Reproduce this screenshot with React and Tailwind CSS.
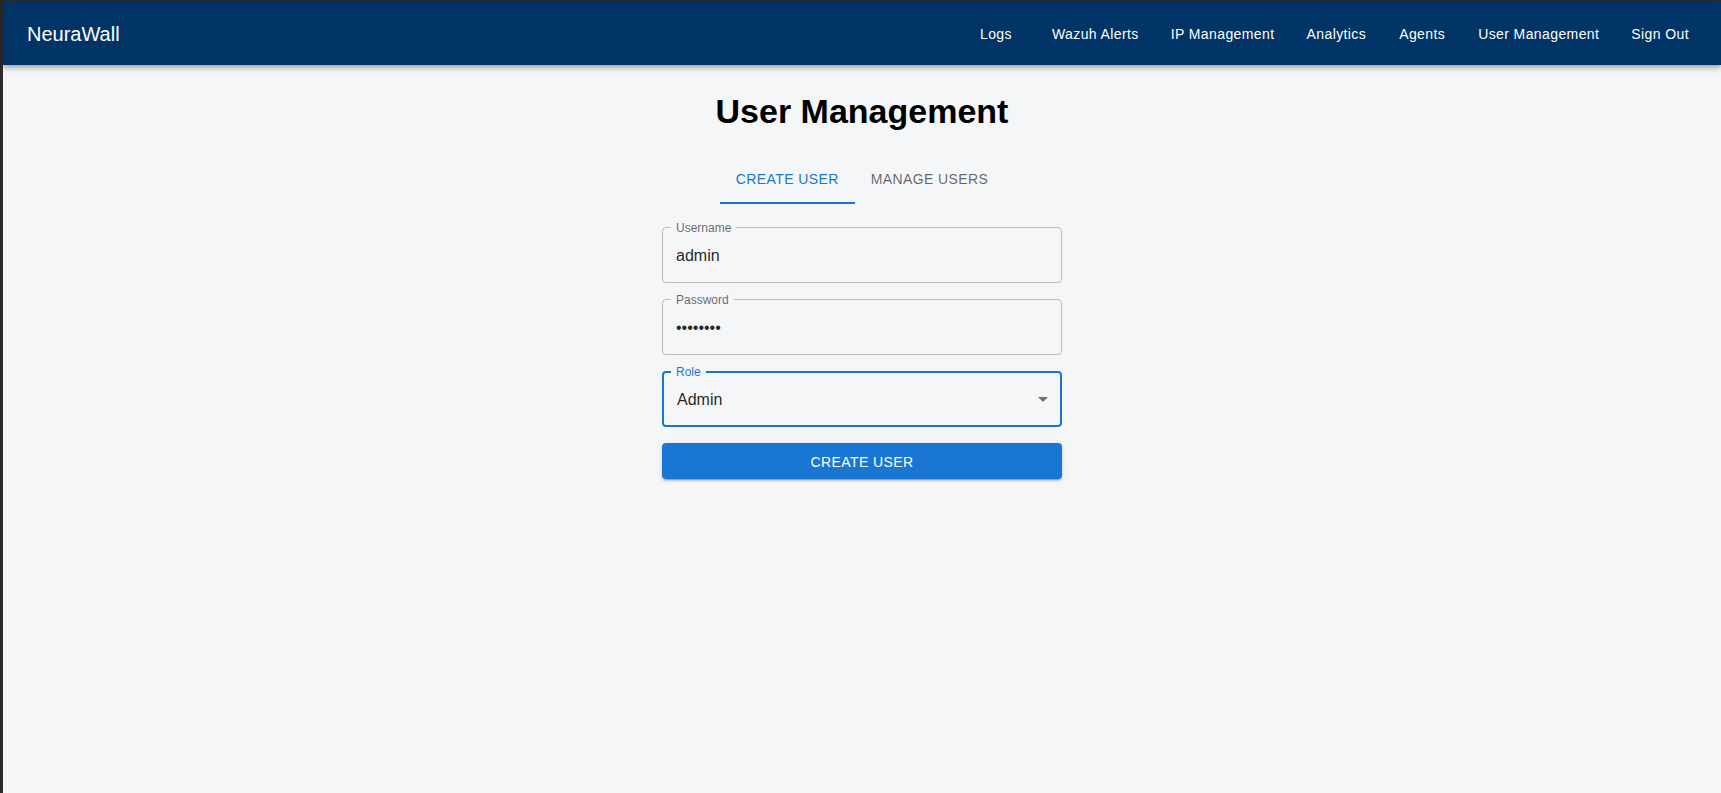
import React, { useState } from 'react';

const navItems = ['Logs', 'Wazuh Alerts', 'IP Management', 'Analytics', 'Agents', 'User Management', 'Sign Out'];

const sans = { fontFamily: '"Liberation Sans", Arial, Helvetica, sans-serif' };

// outlined text field, label sits on the top border
const Field = ({ label, type = 'text', value }) => (
  <div className="relative h-14 rounded border border-[rgba(0,0,0,0.23)]">
    <label className="absolute -top-[8px] left-[8px] px-[5px] bg-[#f5f6f8] text-xs leading-4 text-[rgba(0,0,0,0.6)]">
      {label}
    </label>
    <input
      type={type}
      defaultValue={value}
      readOnly
      className="w-full h-full bg-transparent px-[13px] pt-[2px] text-base text-[rgba(0,0,0,0.87)] outline-none"
      style={sans}
    />
  </div>
);

const App = () => {
  const [tab, setTab] = useState(0);

  return (
    <div className="min-h-[793px] bg-[#f5f6f8] border-t border-l-[3px] border-[#2b2b2b]" style={sans}>
      {/* --- App bar --- */}
      <header className="h-16 bg-[#003366] text-white flex items-center px-6 pt-[2px] shadow-[0px_2px_4px_-1px_rgba(0,0,0,0.2),0px_4px_5px_0px_rgba(0,0,0,0.14),0px_1px_10px_0px_rgba(0,0,0,0.12)]">
        <div className="flex-1 text-xl">NeuraWall</div>
        <nav className="flex items-center gap-4">
          {navItems.map((item) => (
            <button key={item} className="min-w-[64px] px-2 py-1.5 text-sm tracking-[0.4px] leading-6 rounded hover:bg-white/10">
              {item}
            </button>
          ))}
        </nav>
      </header>

      {/* --- Content --- */}
      <main className="flex flex-col items-center pt-[25px]">
        <h1 className="text-[34px] leading-[42px] font-bold text-black">User Management</h1>

        <div className="flex mt-6">
          {['Create User', 'Manage Users'].map((t, i) => (
            <button
              key={t}
              onClick={() => setTab(i)}
              className={`h-12 min-w-[90px] px-4 uppercase text-sm tracking-[0.4px] border-b-2 ${
                tab === i ? 'text-[#1976d2] border-[#1976d2]' : 'text-[rgba(0,0,0,0.6)] border-transparent'
              }`}
            >
              {t}
            </button>
          ))}
        </div>

        <form className="w-[400px] mt-[23px] flex flex-col gap-4" onSubmit={(e) => e.preventDefault()}>
          <Field label="Username" value="admin" />
          <Field label="Password" type="password" value="admin123" />

          <div className="relative h-14 rounded border-2 border-[#1976d2] flex items-center pl-[13px] pr-[5px]">
            <label className="absolute -top-[9px] left-[7px] px-[5px] bg-[#f5f6f8] text-xs leading-4 text-[#1976d2]">Role</label>
            <span className="flex-1 pt-[2px] text-base text-[rgba(0,0,0,0.87)]">Admin</span>
            <svg viewBox="0 0 24 24" className="w-6 h-6 fill-[rgba(0,0,0,0.54)]">
              <path d="M7 10l5 5 5-5z" />
            </svg>
          </div>

          <button
            type="submit"
            className="h-9 rounded bg-[#1976d2] text-white uppercase text-sm tracking-[0.4px] pt-px shadow-[0px_3px_1px_-2px_rgba(0,0,0,0.2),0px_2px_2px_0px_rgba(0,0,0,0.14),0px_1px_5px_0px_rgba(0,0,0,0.12)]"
          >
            Create User
          </button>
        </form>
      </main>
    </div>
  );
};

export default App;
